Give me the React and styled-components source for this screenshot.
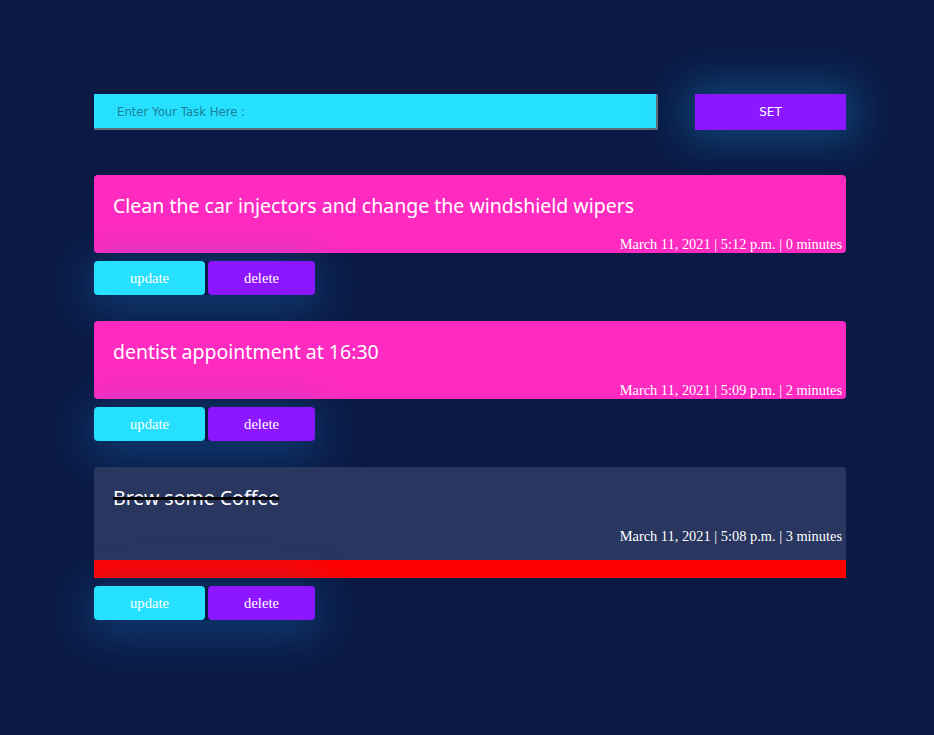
import React from "react";
import styled, { createGlobalStyle } from "styled-components";

const GlobalStyle = createGlobalStyle`
  html, body {
    margin: 0;
    padding: 0;
    background: #0b1a45;
    min-height: 100%;
  }
  body {
    min-height: 735px;
  }
`;

const Page = styled.div`
  width: 752px;
  padding: 94px 0 0 94px;
`;

const InputRow = styled.form`
  display: flex;
  justify-content: space-between;
  margin-bottom: 45px;
`;

const TaskInput = styled.input`
  box-sizing: border-box;
  width: 564px;
  height: 36px;
  border: none;
  border-right: 2px solid #5f6b78;
  border-bottom: 2px solid #5f6b78;
  background: #26e0ff;
  padding: 2px 0 0 23px;
  font-family: "DejaVu Sans", sans-serif;
  font-size: 11.7px;
  outline: none;

  &::placeholder {
    color: #1d7f98;
  }
`;

const SetButton = styled.button`
  width: 151px;
  height: 36px;
  border: none;
  background: #8c16ff;
  color: #fff;
  font-family: "DejaVu Sans", sans-serif;
  font-size: 12px;
  box-shadow: 0 0 40px 10px rgba(20, 140, 200, 0.4);
`;

const Task = styled.div`
  margin-bottom: 26px;
`;

const Card = styled.div`
  background: ${(p) => (p.done ? "#29365f" : "#ff2abf")};
  border-radius: ${(p) => (p.done ? "4px 4px 0 0" : "4px")};
  padding: 17px 4px ${(p) => (p.done ? "15px" : "0")} 19px;
`;

const Title = styled.div`
  font-family: "Comic Sans MS", "Noto Sans", sans-serif;
  font-size: 19.5px;
  line-height: 28px;
  color: #fff;
  text-decoration: ${(p) => (p.done ? "line-through" : "none")};
  text-decoration-color: #000;
  text-decoration-thickness: 3px;
`;

const Meta = styled.div`
  margin-top: 15px;
  text-align: right;
  font-family: "Liberation Serif", serif;
  font-size: 14.4px;
  line-height: 18px;
  color: #fff;
`;

const DoneBar = styled.div`
  height: 18px;
  background: #ff0000;
`;

const Actions = styled.div`
  display: flex;
  gap: 3px;
  width: 221px;
  margin-top: 8px;
  border-radius: 4px;
  box-shadow: 0 8px 45px 6px rgba(20, 130, 210, 0.35);
`;

const ActionButton = styled.button`
  width: ${(p) => p.w}px;
  height: 34px;
  border: none;
  border-radius: 4px;
  background: ${(p) => p.bg};
  color: #fff;
  font-family: "Liberation Serif", serif;
  font-size: 14.6px;
  padding: 1px 0 0;
`;

const tasks = [
  {
    title: "Clean the car injectors and change the windshield wipers",
    meta: "March 11, 2021 | 5:12 p.m. | 0 minutes",
    done: false,
  },
  {
    title: "dentist appointment at 16:30",
    meta: "March 11, 2021 | 5:09 p.m. | 2 minutes",
    done: false,
  },
  {
    title: "Brew some Coffee",
    meta: "March 11, 2021 | 5:08 p.m. | 3 minutes",
    done: true,
  },
];

export default function App() {
  return (
    <>
      <GlobalStyle />
      <Page>
        <InputRow onSubmit={(e) => e.preventDefault()}>
          <TaskInput placeholder="Enter Your Task Here :" />
          <SetButton type="submit">SET</SetButton>
        </InputRow>
        {tasks.map((t) => (
          <Task key={t.title}>
            <Card done={t.done}>
              <Title done={t.done}>{t.title}</Title>
              <Meta>{t.meta}</Meta>
            </Card>
            {t.done && <DoneBar />}
            <Actions>
              <ActionButton w={111} bg="#26e0ff">
                update
              </ActionButton>
              <ActionButton w={107} bg="#8c16ff">
                delete
              </ActionButton>
            </Actions>
          </Task>
        ))}
      </Page>
    </>
  );
}
